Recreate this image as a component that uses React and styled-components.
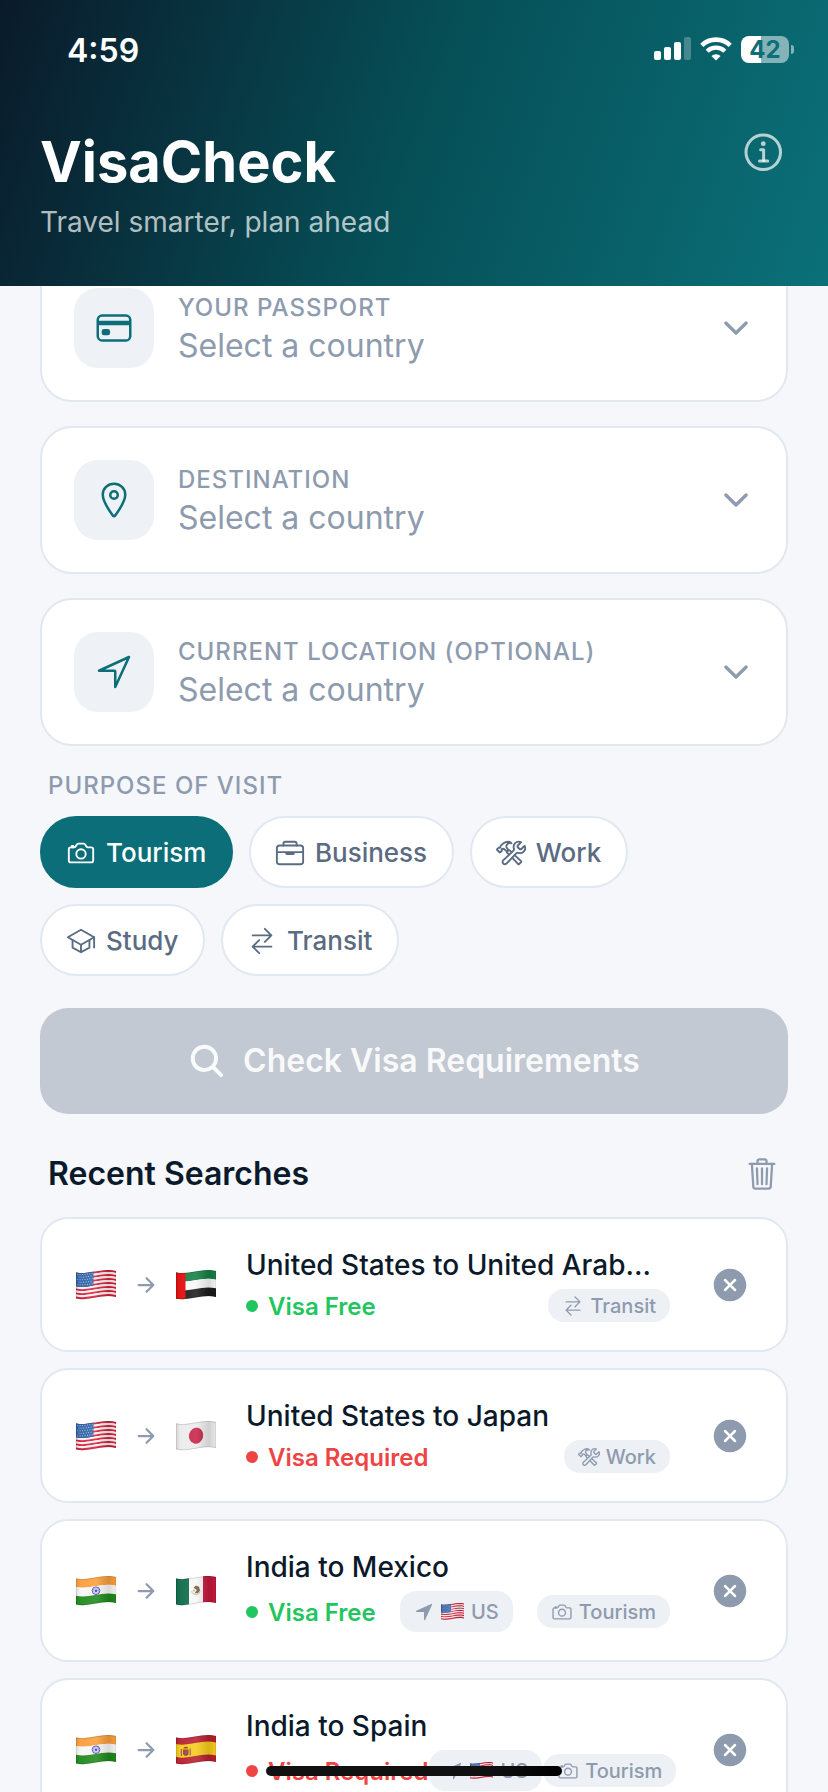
import React from 'react';
import styled, { createGlobalStyle } from 'styled-components';
import {
  IoArrowForward,
  IoBriefcaseOutline,
  IoCameraOutline,
  IoCardOutline,
  IoChevronDown,
  IoCloseCircle,
  IoConstructOutline,
  IoInformationCircleOutline,
  IoLocationOutline,
  IoNavigate,
  IoNavigateOutline,
  IoSchoolOutline,
  IoSearch,
  IoSwapHorizontalOutline,
  IoTrashOutline,
} from 'react-icons/io5';

const GlobalStyle = createGlobalStyle`
  :root {
    --color-navy: #0b1a2b;
    --color-teal: #0b6e78;
    --color-slate: #5a6b82;
    --color-grey: #8e9bae;
    --color-border: #e1e8f0;
    --color-chip: #edf0f5;
    --color-page: #f5f7fb;
    --color-green: #22c55e;
    --color-red: #ef4444;
  }

  * {
    box-sizing: border-box;
  }

  body {
    margin: 0;
    font-family: Inter, sans-serif;
    background: var(--color-page);
  }

  svg {
    display: block;
    flex-shrink: 0;
  }
`;

const Screen = styled.div`
  position: relative;
  width: 828px;
  height: 1792px;
  overflow: hidden;
  background: var(--color-page);
`;

const Header = styled.header`
  position: relative;
  z-index: 1;
  height: 286px;
  color: #fff;
  background: linear-gradient(109.06deg, #0a1a2a 0%, #064f57 50%, #0b7079 100%);
`;

const StatusBar = styled.div`
  height: 98px;
  padding: 0 34px 0 67px;
  display: flex;
  align-items: center;
  justify-content: space-between;
`;

const Clock = styled.span`
  font-size: 32px;
  font-weight: 600;
  line-height: 38px;
  padding-top: 3px;
`;

const StatusIcons = styled.div`
  display: flex;
  align-items: center;
`;

const Battery = styled.div`
  width: 48px;
  height: 27px;
  margin-left: 9px;
  border-radius: 8px;
  display: flex;
  align-items: center;
  justify-content: center;
  font-size: 24px;
  font-weight: 700;
  line-height: 27px;
  color: var(--color-teal);
  background: linear-gradient(90deg, #fff 42%, rgba(255, 255, 255, 0.5) 42%);
`;

const BatteryNub = styled.div`
  width: 3px;
  height: 9px;
  margin-left: 2px;
  border-radius: 0 5px 5px 0;
  background: rgba(255, 255, 255, 0.5);
`;

const Heading = styled.div`
  display: flex;
  justify-content: space-between;
  padding: 30px 40px 0;
  color: rgba(255, 255, 255, 0.7);
`;

const Title = styled.h1`
  margin: 0;
  font-size: 56px;
  font-weight: 700;
  line-height: 68px;
  color: #fff;
`;

const Subtitle = styled.p`
  margin: 9px 0 0;
  font-size: 28px;
  line-height: 34px;
`;

const InfoIcon = styled(IoInformationCircleOutline)`
  margin-top: 1px;
`;

const Content = styled.main`
  margin-top: -32px;
  padding: 0 40px;
`;

const Fields = styled.div`
  display: flex;
  flex-direction: column;
  gap: 24px;
`;

const Field = styled.div`
  height: 148px;
  padding: 0 32px;
  display: flex;
  align-items: center;
  gap: 24px;
  border: 2px solid var(--color-border);
  border-radius: 32px;
  background: #fff;
  color: var(--color-grey);
`;

const FieldIcon = styled.div`
  width: 80px;
  height: 80px;
  border-radius: 24px;
  display: flex;
  align-items: center;
  justify-content: center;
  color: var(--color-teal);
  background: #eef1f6;
`;

const FieldText = styled.div`
  flex: 1;
  display: flex;
  flex-direction: column;
  gap: 4px;
  padding-top: 2px;
`;

const Label = styled.span`
  font-size: 24px;
  font-weight: 500;
  line-height: 29px;
  letter-spacing: 1px;
  text-transform: uppercase;
`;

const Value = styled.span`
  font-size: 32px;
  line-height: 39px;
`;

const PurposeLabel = styled(Label)`
  display: block;
  margin: 25px 8px 16px;
  color: var(--color-grey);
`;

const Pills = styled.div`
  display: flex;
  flex-wrap: wrap;
  gap: 16px;
`;

const Pill = styled.button`
  height: 72px;
  padding: 1px 24.6px 0 24px;
  display: flex;
  align-items: center;
  gap: 10px;
  border: 2px solid ${({ $active }) => ($active ? 'var(--color-teal)' : 'var(--color-border)')};
  border-radius: 36px;
  font: 500 26px/32px Inter, sans-serif;
  color: ${({ $active }) => ($active ? '#fff' : 'var(--color-slate)')};
  background: ${({ $active }) => ($active ? 'var(--color-teal)' : '#fff')};
`;

const CheckButton = styled.button`
  width: 100%;
  height: 106px;
  margin-top: 32px;
  padding: 0 1px 1px 0;
  display: flex;
  align-items: center;
  justify-content: center;
  gap: 16px;
  border: 0;
  border-radius: 28px;
  font: 600 32px/39px Inter, sans-serif;
  color: rgba(255, 255, 255, 0.92);
  background: #c2c9d3;
`;

const RecentHeader = styled.div`
  margin: 40px 8px 24px;
  display: flex;
  align-items: center;
  justify-content: space-between;
  color: var(--color-grey);
`;

const RecentTitle = styled.h2`
  margin: 0;
  font-size: 32px;
  font-weight: 600;
  line-height: 39px;
  color: var(--color-navy);
`;

const RecentList = styled.div`
  display: flex;
  flex-direction: column;
  gap: 16px;
`;

const RecentCard = styled.div`
  padding: 28px 36px 28px 34px;
  display: flex;
  align-items: center;
  border: 2px solid var(--color-border);
  border-radius: 28px;
  background: #fff;
  color: var(--color-grey);
`;

const Route = styled.div`
  display: flex;
  align-items: center;
  gap: 18px;
`;

const RecentInfo = styled.div`
  width: 424px;
  margin: 0 40px 0 30px;
`;

const RecentName = styled.div`
  font-size: 28px;
  font-weight: 500;
  line-height: 34px;
  padding-top: 1px;
  margin-bottom: 7px;
  white-space: nowrap;
  color: var(--color-navy);
`;

const Details = styled.div`
  display: flex;
  align-items: center;
  justify-content: space-between;
  gap: 1px;
`;

const Status = styled.div`
  display: flex;
  align-items: center;
  gap: 10px;
  flex-shrink: 0;
  padding-top: 1px;
  font-size: 24px;
  font-weight: 600;
  line-height: 29px;
  white-space: nowrap;
  color: ${({ $free }) => ($free ? 'var(--color-green)' : 'var(--color-red)')};

  &::before {
    content: '';
    width: 12px;
    height: 12px;
    border-radius: 50%;
    background: currentColor;
  }
`;

const Chip = styled.div`
  height: ${({ $tall }) => ($tall ? 41 : 33)}px;
  padding: 0 14px;
  display: flex;
  align-items: center;
  gap: ${({ $tall }) => ($tall ? 7 : 6)}px;
  flex-shrink: 0;
  border-radius: 16px;
  font-size: 20px;
  font-weight: 500;
  background: var(--color-chip);
`;

const HomeIndicator = styled.div`
  position: absolute;
  left: 266px;
  top: 1766px;
  z-index: 2;
  width: 296px;
  height: 10px;
  border-radius: 5px;
  background: linear-gradient(90deg, #111 75%, #000);
`;

/* one horizontal band of a waving flag, from y1 to y2 */
const band = (y1, y2) =>
  `M0 ${y1 + 2.4} C13 ${y1 + 5.6} 26 ${y1 - 2.6} 40 ${y1 + 1} V${y2 + 1} C26 ${y2 - 2.6} 13 ${y2 + 5.6} 0 ${y2 + 2.4}Z`;

const Bands = ({ colors }) => {
  const h = 26 / colors.length;
  return colors.map((color, i) => <path key={i} d={band(i * h, (i + 1) * h)} fill={color} />);
};

const flags = {
  us: (
    <>
      <Bands colors={Array.from({ length: 13 }, (_, i) => (i % 2 ? '#f4f1f1' : '#d9203a'))} />
      <path d="M0 2.4 C6 3.9 12 2.7 17.5 1.5 V15.5 C12 16.8 6 17.9 0 16.4Z" fill="#2e62a8" />
      {[0, 1, 2, 3, 4].map((row) => (
        <path
          key={row}
          d={`M${row % 2 ? 2.6 : 1.4} ${row * 2.6 + 4.4} C6 ${row * 2.6 + 5} 12 ${row * 2.6 + 4} 17 ${row * 2.6 + 3.1}`}
          stroke="#c9d8ee"
          strokeWidth="0.9"
          strokeDasharray="0.9 1.5"
          fill="none"
        />
      ))}
    </>
  ),
  ae: (
    <>
      <Bands colors={['#157f45', '#f7f7f7', '#1c1c1c']} />
      <path d="M0 2.4 C4 3.4 7 3.2 9.5 2.7 V28.7 C7 29.2 4 29.4 0 28.4Z" fill="#e30b0b" />
    </>
  ),
  jp: (
    <>
      <Bands colors={['#ececec']} />
      <ellipse cx="20" cy="14.7" rx="7.1" ry="8.1" fill="#c8234a" transform="rotate(14 20 15)" />
    </>
  ),
  in: (
    <>
      <Bands colors={['#fa9d3c', '#f6f6f6', '#1f8a1c']} />
      <circle cx="20" cy="14.7" r="3.8" fill="#e9e9f8" stroke="#3a35b0" strokeWidth="0.9" />
      <circle cx="20" cy="14.7" r="2.6" stroke="#8a87d6" strokeWidth="1.4" strokeDasharray="0.5 0.6" fill="none" />
      <circle cx="20" cy="14.7" r="1.3" fill="#3a35b0" />
    </>
  ),
  mx: (
    <>
      <Bands colors={['#f7f7f7']} />
      <path d="M0 2.4 C5 3.6 9 3.2 13 2.3 V28.3 C9 29.2 5 29.6 0 28.4Z" fill="#0f6b4a" />
      <path d="M27 .3 C31 -.1 35 0 40 1 V27 C35 26 31 25.9 27 26.3Z" fill="#c4183c" />
      <path d="M15.8 15 C16 19.6 22.5 20 24 15.5" stroke="#a9bfa0" strokeWidth="1" fill="none" />
      <path d="M17.5 11.8 L20 9.6 L23 10.8 L24 14.5 L22 17 L18.5 17.4 L20.8 14Z" fill="#7d5a3a" />
      <circle cx="18" cy="14.6" r="1.1" fill="#d9b75a" />
      <circle cx="21.8" cy="13" r="0.8" fill="#3f7a55" />
    </>
  ),
  es: (
    <>
      <path d={band(0, 26)} fill="#b81f30" />
      <path d={band(6.5, 19.5)} fill="#f5cc1b" />
      <path d="M5.4 14 V21 M14.2 13.6 V20.6" stroke="#8b5a50" strokeWidth="1.2" />
      <path d="M7 14.5 H12.6 V18.5 C12.6 21.6 7 21.6 7 18.5Z" fill="#a8392f" />
      <path d="M7.4 13.6 C7.2 11 12.4 11 12.2 13.6Z" fill="#8a4a1c" />
      <circle cx="9.8" cy="17.6" r="1.1" fill="#5d5f9a" />
    </>
  ),
};

const Flag = ({ code, width = 40 }) => (
  <svg width={width} height={width * 0.75} viewBox="0 0 40 30">
    <defs>
      <linearGradient id="flag-shade">
        <stop offset="0" stopColor="#000" stopOpacity="0.12" />
        <stop offset="0.12" stopColor="#fff" stopOpacity="0.05" />
        <stop offset="0.5" stopColor="#fff" stopOpacity="0.12" />
        <stop offset="0.82" stopColor="#000" stopOpacity="0.12" />
        <stop offset="1" stopColor="#000" stopOpacity="0.02" />
      </linearGradient>
    </defs>
    {flags[code]}
    <path d={band(0.3, 25.7)} fill="url(#flag-shade)" stroke="#000" strokeOpacity="0.18" strokeWidth="0.8" />
  </svg>
);

const Signal = () => (
  <svg width="37" height="24" viewBox="0 0 37 24" fill="#fff">
    <rect x="0" y="14" width="7" height="9" rx="2" />
    <rect x="10" y="10" width="7" height="13" rx="2" />
    <rect x="20" y="5" width="7" height="18" rx="2" />
    <rect x="30" y="0" width="7" height="23" rx="2" opacity="0.25" />
  </svg>
);

const WifiIcon = styled.svg`
  margin-left: 9.5px;
`;

const Wifi = () => (
  <WifiIcon width="32" height="24" viewBox="0 0 32 24" fill="none" stroke="#fff">
    <path d="M1.8 8.4 A20.4 20.4 0 0 1 30.2 8.4" strokeWidth="4.6" />
    <path d="M7.2 14.2 A12.6 12.6 0 0 1 24.8 14.2" strokeWidth="4.4" />
    <path d="M16 23.6 L11.4 19 A6.6 6.6 0 0 1 20.6 19Z" fill="#fff" stroke="none" />
  </WifiIcon>
);

const fields = [
  { label: 'Your passport', icon: IoCardOutline },
  { label: 'Destination', icon: IoLocationOutline },
  { label: 'Current location (optional)', icon: IoNavigateOutline },
];

const purposes = {
  Tourism: IoCameraOutline,
  Business: IoBriefcaseOutline,
  Work: IoConstructOutline,
  Study: IoSchoolOutline,
  Transit: IoSwapHorizontalOutline,
};

const recents = [
  { from: 'us', to: 'ae', name: 'United States to United Arab…', free: true, purpose: 'Transit' },
  { from: 'us', to: 'jp', name: 'United States to Japan', free: false, purpose: 'Work' },
  { from: 'in', to: 'mx', name: 'India to Mexico', free: true, location: 'US', purpose: 'Tourism' },
  { from: 'in', to: 'es', name: 'India to Spain', free: false, location: 'US', purpose: 'Tourism' },
];

const RecentItem = ({ from, to, name, free, location, purpose }) => {
  const PurposeIcon = purposes[purpose];

  return (
    <RecentCard>
      <Route>
        <Flag code={from} />
        <IoArrowForward size={24} />
        <Flag code={to} />
      </Route>
      <RecentInfo>
        <RecentName>{name}</RecentName>
        <Details>
          <Status $free={free}>{free ? 'Visa Free' : 'Visa Required'}</Status>
          {location && (
            <Chip $tall>
              <IoNavigate size={20} />
              <Flag code="us" width={23} />
              {location}
            </Chip>
          )}
          <Chip>
            <PurposeIcon size={22} />
            {purpose}
          </Chip>
        </Details>
      </RecentInfo>
      <IoCloseCircle size={40} />
    </RecentCard>
  );
};

const App = () => (
  <Screen>
    <GlobalStyle />
    <Header>
      <StatusBar>
        <Clock>4:59</Clock>
        <StatusIcons>
          <Signal />
          <Wifi />
          <Battery>42</Battery>
          <BatteryNub />
        </StatusIcons>
      </StatusBar>
      <Heading>
        <div>
          <Title>VisaCheck</Title>
          <Subtitle>Travel smarter, plan ahead</Subtitle>
        </div>
        <InfoIcon size={48} />
      </Heading>
    </Header>
    <Content>
      <Fields>
        {fields.map(({ label, icon: Icon }) => (
          <Field key={label}>
            <FieldIcon>
              <Icon size={40} />
            </FieldIcon>
            <FieldText>
              <Label>{label}</Label>
              <Value>Select a country</Value>
            </FieldText>
            <IoChevronDown size={36} />
          </Field>
        ))}
      </Fields>
      <PurposeLabel>Purpose of visit</PurposeLabel>
      <Pills>
        {Object.entries(purposes).map(([name, Icon]) => (
          <Pill key={name} $active={name === 'Tourism'}>
            <Icon size={30} />
            {name}
          </Pill>
        ))}
      </Pills>
      <CheckButton>
        <IoSearch size={40} />
        Check Visa Requirements
      </CheckButton>
      <RecentHeader>
        <RecentTitle>Recent Searches</RecentTitle>
        <IoTrashOutline size={36} />
      </RecentHeader>
      <RecentList>
        {recents.map((item) => (
          <RecentItem key={item.name} {...item} />
        ))}
      </RecentList>
    </Content>
    <HomeIndicator />
  </Screen>
);

export default App;
